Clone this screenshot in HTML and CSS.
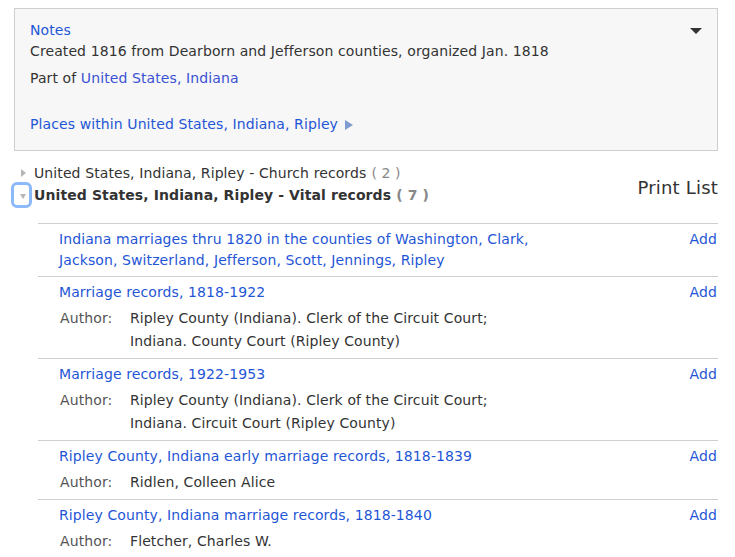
FILE: index.html
```html
<!DOCTYPE html>
<html lang="en">
<head>
    <meta charset="UTF-8">
    <meta name="viewport" content="width=device-width, initial-scale=1.0">
    <title>Ripley County Catalog</title>
    <link rel="stylesheet" href="styles.css">
</head>
<body>
    <div class="page">
        <div class="notes">
            <div class="notes-head">
                <a href="#notes" class="link">Notes</a>
                <span class="caret-down"></span>
            </div>
            <p class="notes-text">Created 1816 from Dearborn and Jefferson counties, organized Jan. 1818</p>
            <p class="part-of">Part of <a href="#indiana" class="link visited">United States, Indiana</a></p>
            <p class="places"><a href="#places" class="link">Places within United States, Indiana, Ripley <span class="arrow-right"></span></a></p>
        </div>

        <div class="topics">
            <div class="tree">
                <div class="tree-row">
                    <span class="toggle"><span class="tri-right"></span></span>
                    <span>United States, Indiana, Ripley - Church records</span>
                    <span class="count">( 2 )</span>
                </div>
                <div class="tree-row open">
                    <span class="toggle focused"><span class="tri-down"></span></span>
                    <span>United States, Indiana, Ripley - Vital records</span>
                    <span class="count">( 7 )</span>
                </div>
            </div>
            <div class="print-list">Print List</div>
        </div>

        <ul class="record-list">
            <li class="record">
                <div class="record-main">
                    <a href="#r1" class="link title">Indiana marriages thru 1820 in the counties of Washington, Clark, Jackson, Switzerland, Jefferson, Scott, Jennings, Ripley</a>
                </div>
                <a href="#add" class="link add">Add</a>
            </li>
            <li class="record">
                <div class="record-main">
                    <a href="#r2" class="link title">Marriage records, 1818-1922</a>
                    <div class="author">
                        <span class="author-label">Author:</span>
                        <span class="author-value">Ripley County (Indiana). Clerk of the Circuit Court;<br>Indiana. County Court (Ripley County)</span>
                    </div>
                </div>
                <a href="#add" class="link add">Add</a>
            </li>
            <li class="record">
                <div class="record-main">
                    <a href="#r3" class="link title">Marriage records, 1922-1953</a>
                    <div class="author">
                        <span class="author-label">Author:</span>
                        <span class="author-value">Ripley County (Indiana). Clerk of the Circuit Court;<br>Indiana. Circuit Court (Ripley County)</span>
                    </div>
                </div>
                <a href="#add" class="link add">Add</a>
            </li>
            <li class="record">
                <div class="record-main">
                    <a href="#r4" class="link title">Ripley County, Indiana early marriage records, 1818-1839</a>
                    <div class="author">
                        <span class="author-label">Author:</span>
                        <span class="author-value">Ridlen, Colleen Alice</span>
                    </div>
                </div>
                <a href="#add" class="link add">Add</a>
            </li>
            <li class="record">
                <div class="record-main">
                    <a href="#r5" class="link title">Ripley County, Indiana marriage records, 1818-1840</a>
                    <div class="author">
                        <span class="author-label">Author:</span>
                        <span class="author-value">Fletcher, Charles W.</span>
                    </div>
                </div>
                <a href="#add" class="link add">Add</a>
            </li>
        </ul>
    </div>
</body>
</html>
```

FILE: styles.css
```css
body {
    font-family: "DejaVu Sans", Verdana, sans-serif;
    font-size: 14px;
    letter-spacing: 0.1px;
    line-height: 21px;
    color: #333;
    margin: 0;
    padding: 0;
    background: #fff;
}
.page {
    padding: 8px 17px 0 14px;
}
.link {
    color: #1f56d6;
    text-decoration: none;
}
.link.visited {
    color: #3b52d4;
}
p {
    margin: 0;
}
.notes {
    border: 1px solid #cfcfcf;
    background-color: #f7f7f7;
    padding: 11px 15px 15px 15px;
}
.notes-head {
    display: flex;
    justify-content: space-between;
    align-items: center;
}
.caret-down {
    width: 0;
    height: 0;
    border-left: 6px solid transparent;
    border-right: 6px solid transparent;
    border-top: 6px solid #333;
    margin-top: 1px;
}
.part-of {
    margin-top: 6px;
}
.places {
    margin-top: 25px;
}
.arrow-right {
    display: inline-block;
    width: 0;
    height: 0;
    border-top: 5px solid transparent;
    border-bottom: 5px solid transparent;
    border-left: 8px solid #7d9bd0;
    margin-left: 2px;
    vertical-align: -1px;
}
.topics {
    display: flex;
    justify-content: space-between;
    align-items: center;
    margin-top: 11px;
}
.tree-row {
    display: flex;
    align-items: center;
    height: 22px;
}
.tree-row.open {
    font-weight: bold;
}
.toggle {
    display: inline-flex;
    justify-content: center;
    align-items: center;
    width: 15px;
    height: 20px;
    margin-right: 5px;
    padding-left: 3px;
    box-sizing: border-box;
    border-radius: 3px;
}
.toggle.focused {
    outline: 3px solid #8cb9f7;
}
.tri-right {
    width: 0;
    height: 0;
    border-top: 4px solid transparent;
    border-bottom: 4px solid transparent;
    border-left: 5px solid #b5b5b5;
}
.tri-down {
    width: 0;
    height: 0;
    border-left: 3px solid transparent;
    border-right: 3px solid transparent;
    border-top: 5px solid #b5b5b5;
    margin-top: 3px;
}
.count {
    color: #888;
    margin-left: 5px;
}
.print-list {
    font-size: 18px;
    letter-spacing: 0.2px;
    color: #333;
    margin-top: 6px;
}
.record-list {
    list-style: none;
    margin: 17px 0 0 24px;
    padding: 0;
    border-top: 1px solid #cfcfcf;
}
.record {
    display: flex;
    justify-content: space-between;
    align-items: flex-start;
    padding: 5px 1px 5px 21px;
    border-bottom: 1px solid #cfcfcf;
}
.record-main {
    width: 500px;
}
.title {
    display: block;
}
.author {
    display: flex;
    margin-top: 4px;
    line-height: 23px;
}
.author-label {
    color: #555;
    width: 71px;
    flex-shrink: 0;
    padding-left: 1px;
    box-sizing: border-box;
}
.author-value {
    color: #333;
}
```
